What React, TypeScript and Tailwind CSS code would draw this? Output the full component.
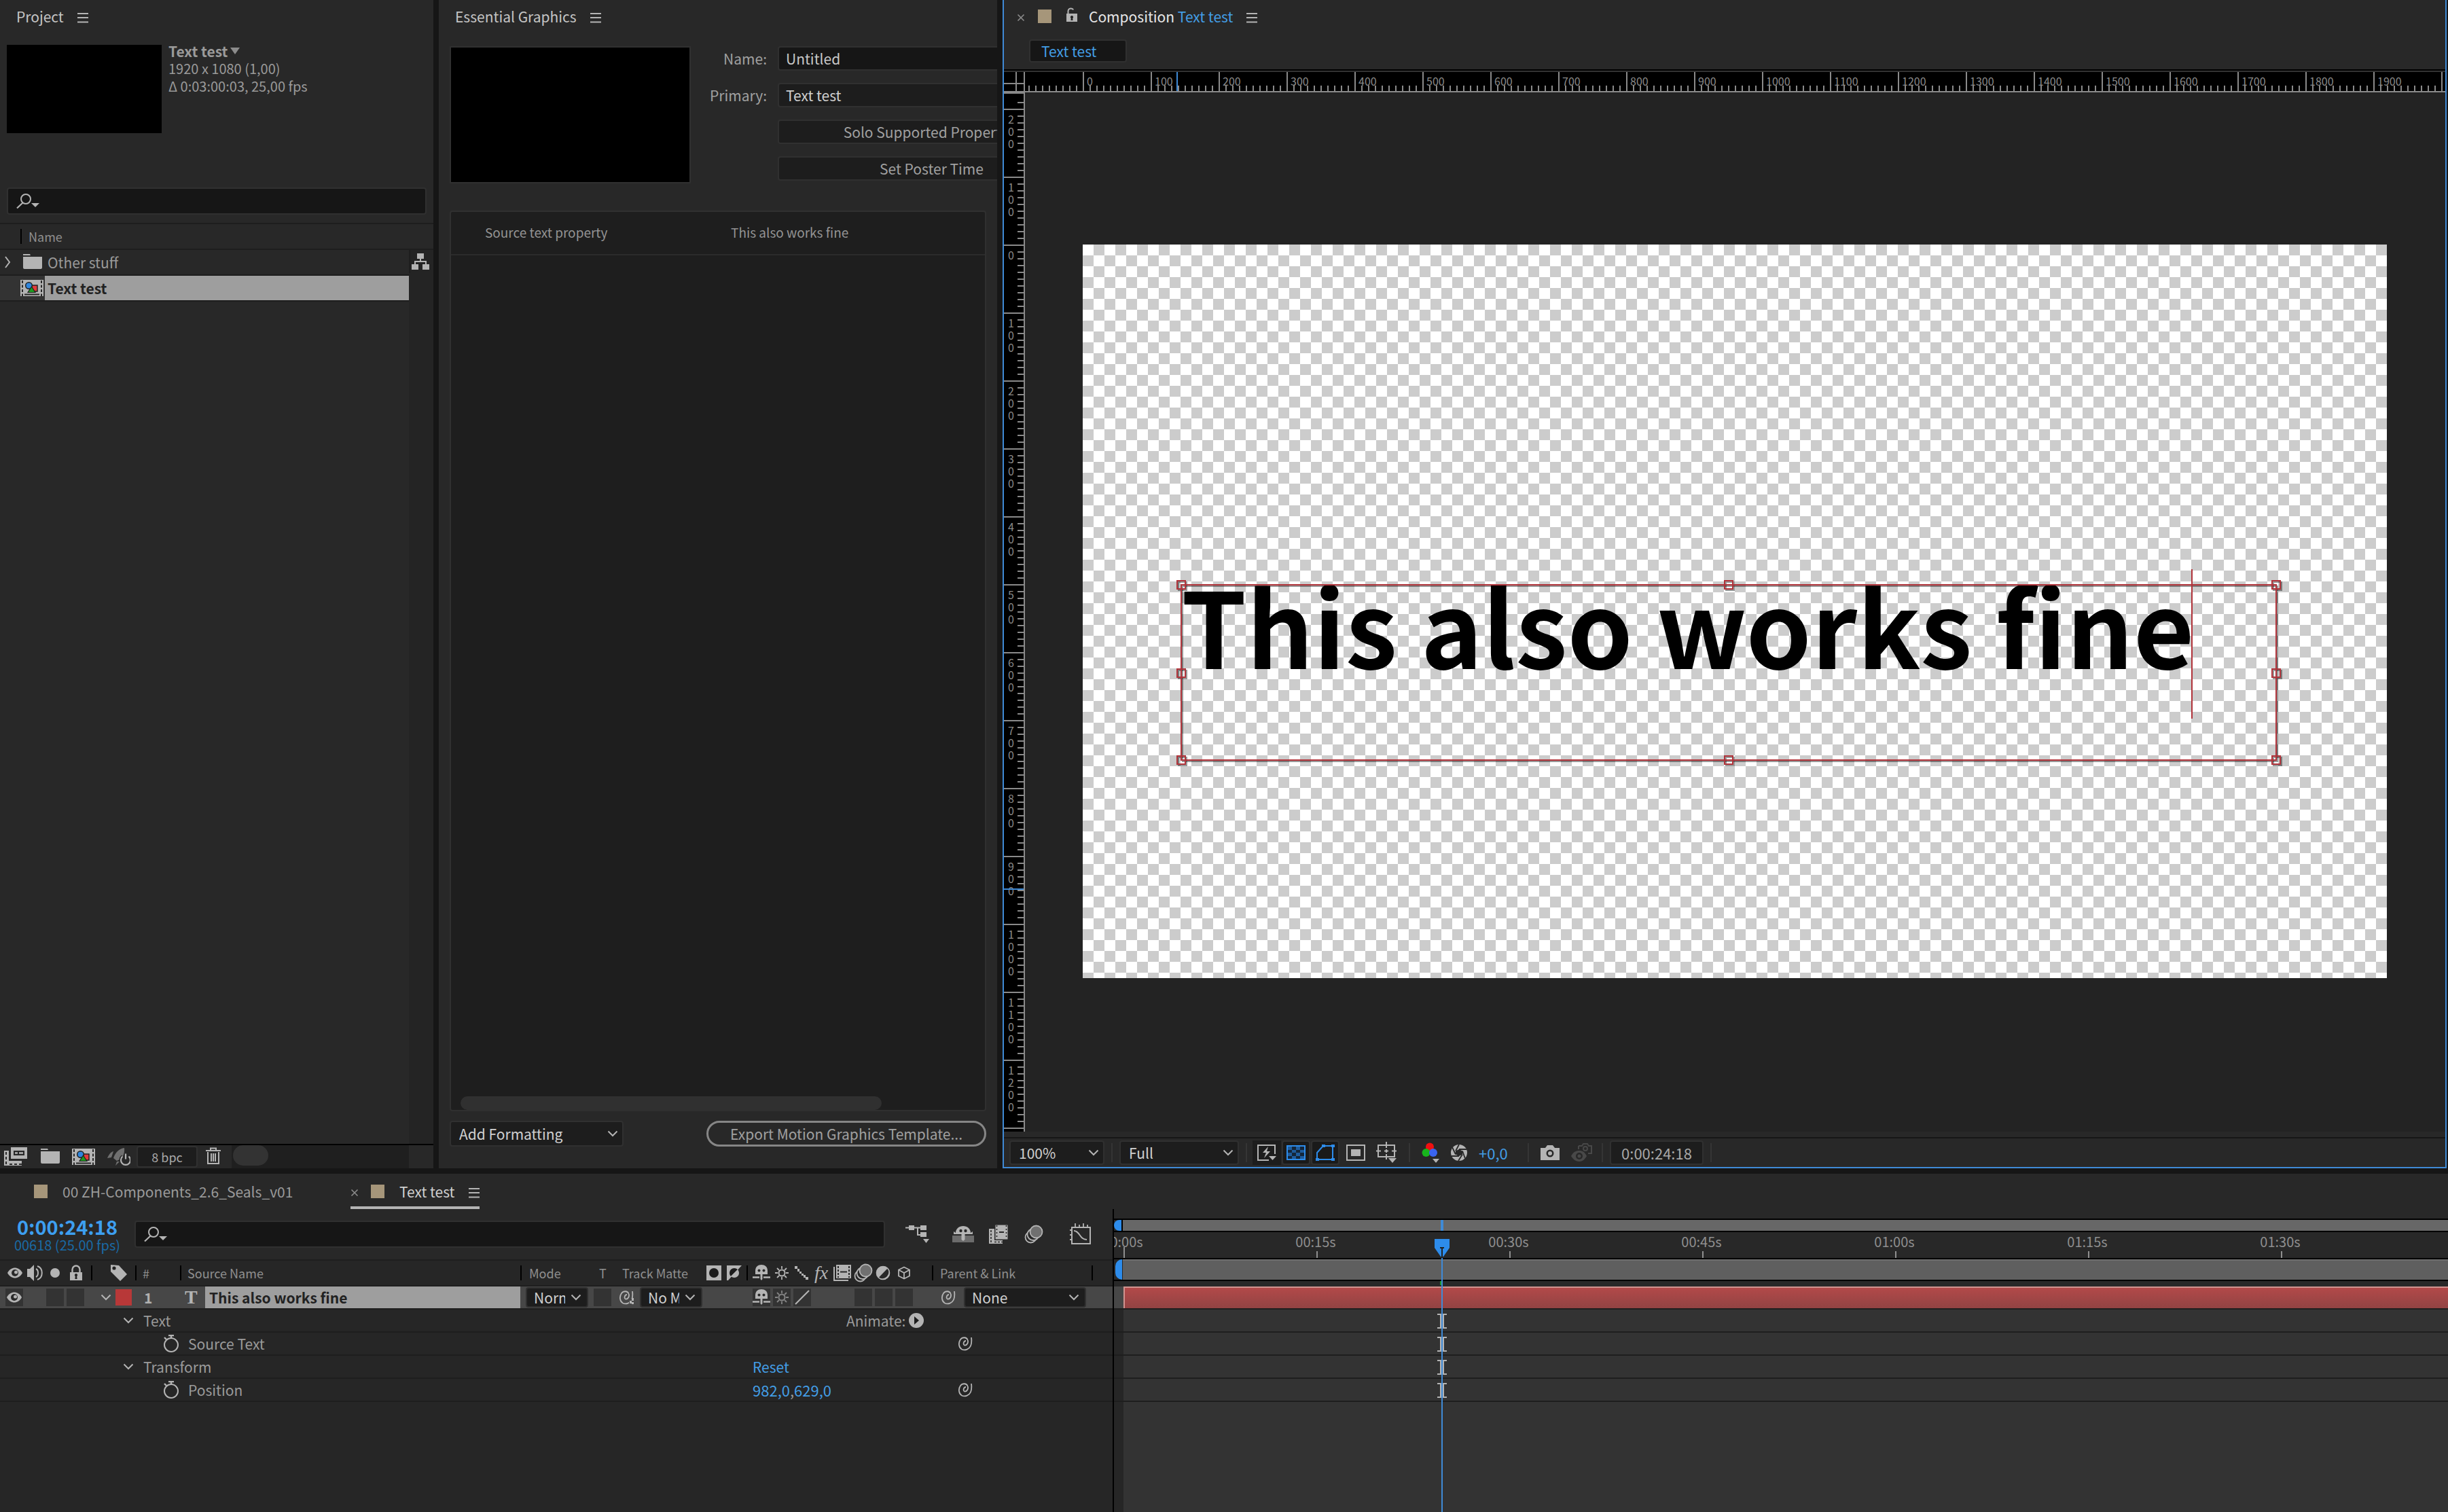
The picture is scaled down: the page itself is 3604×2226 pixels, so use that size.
import type { ReactNode } from "react";

interface IconProps {
  w: number;
  h: number;
  className?: string;
  children: ReactNode;
}

function Icon({ w, h, className = "", children }: IconProps) {
  return (
    <svg width={w} height={h} viewBox={`0 0 ${w} ${h}`} fill="none" className={`shrink-0 ${className}`} aria-hidden="true">
      {children}
    </svg>
  );
}

const GREY = "#b4b4b4";
const BLUE = "#2d8ceb";

// ---------- icons ----------

const MenuIcon = () => (
  <Icon w={16} h={16}>
    <path d="M0 2h16M0 8h16M0 14.500h16" stroke={GREY} strokeWidth="2" />
  </Icon>
);

const CloseIcon = () => (
  <Icon w={12} h={12}>
    <path d="M1.500 1.500l9 9M10.500 1.500l-9 9" stroke="#8c8c8c" strokeWidth="1.600" />
  </Icon>
);

const SearchIcon = () => (
  <Icon w={36} h={24}>
    <circle cx="14" cy="9" r="7" stroke={GREY} strokeWidth="2" />
    <path d="M9.500 14.500L1 22.500" stroke={GREY} strokeWidth="2.200" />
    <path d="M22 15h12l-6 6z" fill={GREY} />
  </Icon>
);

const Chevron = ({ className = "" }: { className?: string }) => (
  <Icon w={16} h={10} className={className}>
    <path d="M1.500 1.500L8 8l6.500-6.500" stroke={GREY} strokeWidth="2" />
  </Icon>
);

const FolderIcon = () => (
  <Icon w={28} h={24}>
    <path d="M0 0h10l1 2H0zM0 4h28v16a2 2 0 0 1-2 2H2a2 2 0 0 1-2-2z" fill={GREY} />
  </Icon>
);

const CompIcon = () => (
  <Icon w={34} h={26}>
    <path d="M0 1h34v24H0z" fill={GREY} />
    <path d="M3 2v23M31 2v23" stroke="#282828" strokeWidth="2" strokeDasharray="4 2.500" />
    <path d="M6 22.500h22" stroke="#282828" strokeWidth="2" />
    <path d="M16 9h9v9h-9z" fill="#e23b3b" stroke="#222" strokeWidth="1.500" />
    <circle cx="12.500" cy="9.500" r="4.800" fill="#2f86dd" stroke="#222" strokeWidth="1.500" />
    <path d="M16.500 11l5.500 8.500H11z" fill="#1f9a20" stroke="#222" strokeWidth="1.200" />
  </Icon>
);

const FlowIcon = () => (
  <Icon w={26} h={24}>
    <path d="M8 0h10v8H8zM0 16h10v8H0zM16 16h10v8H16z" fill={GREY} />
    <path d="M13 8v4M5 16v-4h16v4" stroke={GREY} strokeWidth="2" />
  </Icon>
);

const InterpretIcon = () => (
  <Icon w={34} h={28}>
    <path d="M10 0h24v17H10z" fill={GREY} />
    <path d="M14 5h16v7H14z" fill="#282828" />
    <path d="M16 8.500h4M22 8.500h6" stroke={GREY} strokeWidth="2.400" />
    <path d="M0 5h7v15h19v7H0z" fill={GREY} />
    <path d="M3 7v20M8 25h18" stroke="#282828" strokeWidth="2" strokeDasharray="4 3" />
  </Icon>
);

const RocketIcon = () => (
  <Icon w={34} h={28}>
    <path d="M25 1c-7 1-13 6-16 15l5 4c8-3 12-9 11-19zM9 6c-4 1-7 5-9 10l6-1zM14 21l-2 6 6-6z" fill="#707070" />
    <path d="M22.500 13.500a7 7 0 1 0 9 0M27 9.500v8" stroke="#282828" strokeWidth="5" />
    <path d="M22.500 13.500a7 7 0 1 0 9 0M27 9.500v8" stroke={GREY} strokeWidth="2.200" />
  </Icon>
);

const TrashIcon = () => (
  <Icon w={22} h={26}>
    <path d="M0 5h22M7 5V1.500h8V5" stroke={GREY} strokeWidth="2" />
    <path d="M3 7v17h16V7M8 9v12M11 9v12M14 9v12" stroke={GREY} strokeWidth="2" />
  </Icon>
);

const UnlockIcon = () => (
  <Icon w={18} h={22}>
    <path d="M1 9h16v12H1z" fill={GREY} />
    <path d="M3.500 9V5.500C3.500 2.500 6 1.500 7.500 1.500s3 .5 3.500 2" stroke={GREY} strokeWidth="2" />
    <path d="M9 12a2.200 2.200 0 0 1 1.200 4l.4 3H7.400l.4-3A2.200 2.200 0 0 1 9 12z" fill="#222" />
  </Icon>
);

const LockIcon = () => (
  <Icon w={20} h={24}>
    <path d="M1 11h18v12H1z" fill={GREY} />
    <path d="M4.500 11V7a5.500 5.500 0 0 1 11 0v4" stroke={GREY} strokeWidth="2.400" />
    <path d="M10 13a2.200 2.200 0 0 1 1.200 4l.4 4H8.400l.4-4A2.200 2.200 0 0 1 10 13z" fill="#222" />
  </Icon>
);

const EyeIcon = () => (
  <Icon w={22} h={18}>
    <path d="M0 9C3 3.500 7 1.500 11 1.500S19 3.500 22 9c-3 5.500-7 7.500-11 7.500S3 14.500 0 9z" fill={GREY} />
    <circle cx="11" cy="9" r="5" fill="#282828" />
    <circle cx="12.500" cy="8" r="2.500" fill={GREY} />
  </Icon>
);

const SpeakerIcon = () => (
  <Icon w={24} h={24}>
    <path d="M0 6h4l6-6v24l-6-6H0z" fill={GREY} />
    <path d="M13 6c4 2 4 10 0 12M15 2c9 3 9 17 0 20" stroke={GREY} strokeWidth="2" />
  </Icon>
);

const TagIcon = () => (
  <Icon w={26} h={26}>
    <path d="M1 1l12 1 12 13-10 10L1 11z" fill={GREY} />
    <circle cx="6" cy="6" r="2.600" fill="#222" />
  </Icon>
);

const GhostIcon = () => (
  <Icon w={26} h={26}>
    <path d="M4 15V10c0-6 4-9 9-9s9 3 9 9v5z" fill={GREY} />
    <circle cx="9.500" cy="9.500" r="2" fill="#282828" />
    <circle cx="16.500" cy="9.500" r="2" fill="#282828" />
    <path d="M0 19.500h10M16 19.500h10" stroke={GREY} strokeWidth="2.400" />
    <path d="M11.500 14h3v8l-1.500 2-1.500-2z" fill={GREY} />
  </Icon>
);

const SunIcon = ({ color = GREY }: { color?: string }) => (
  <Icon w={22} h={24}>
    <circle cx="11" cy="12" r="4.500" stroke={color} strokeWidth="2" />
    <path d="M11 2v4M11 18v4M1 12h4M17 12h4M4 5l3 3M15 16l3 3M18 5l-3 3M7 16l-3 3" stroke={color} strokeWidth="1.800" />
  </Icon>
);

const SlashIcon = () => (
  <Icon w={22} h={22}>
    <path d="M1 21L21 1" stroke={GREY} strokeWidth="2.200" />
  </Icon>
);

const StairIcon = () => (
  <Icon w={22} h={22}>
    <path d="M1 1h4v4H1zM5 5h3v4H5zM8 9h3v3H8zM11 12h3v3h-3zM14 14h3v4h-3zM17 17h4v4h-4z" fill={GREY} />
  </Icon>
);

const FilmIcon = () => (
  <Icon w={26} h={24}>
    <path d="M1 3v20h21" stroke={GREY} strokeWidth="2" />
    <path d="M4 0h22v20H4z" fill={GREY} />
    <path d="M7 2v17M23 2v17" stroke="#282828" strokeWidth="2" strokeDasharray="3 2" />
    <path d="M10 10.500h10" stroke="#282828" strokeWidth="2" />
  </Icon>
);

const FramesIcon = () => (
  <Icon w={30} h={30}>
    <path d="M0 7h8v17h12v5H0z" fill={GREY} />
    <path d="M3 9v18M8 26.500h12" stroke="#282828" strokeWidth="1.600" strokeDasharray="3 2" />
    <path d="M9 1h19v22H9z" fill={GREY} stroke="#282828" strokeWidth="1" />
    <path d="M11.500 2v20M25.500 2v20" stroke="#282828" strokeWidth="1.600" strokeDasharray="2 3" />
    <path d="M15 12h7" stroke="#282828" strokeWidth="2" />
  </Icon>
);

const MotionBlurIcon = () => (
  <Icon w={28} h={28}>
    <circle cx="9.500" cy="18.500" r="8" stroke={GREY} strokeWidth="1.800" fill="#282828" />
    <circle cx="13" cy="14.500" r="8.500" stroke={GREY} strokeWidth="1.800" fill="#282828" />
    <circle cx="17.500" cy="10.500" r="9" stroke={GREY} strokeWidth="1.800" fill="#707070" />
  </Icon>
);

const HalfIcon = () => (
  <Icon w={22} h={22}>
    <circle cx="11" cy="11" r="10" fill={GREY} />
    <path d="M18 4A10 10 0 0 1 4.500 18z" fill="#282828" />
    <circle cx="11" cy="11" r="9.500" stroke={GREY} strokeWidth="1.600" />
  </Icon>
);

const CubeIcon = () => (
  <Icon w={20} h={20}>
    <path d="M10 1.500l8 4v9l-8 4-8-4v-9zM2 5.500l8 4.500 8-4.500M10 10v8.500" stroke={GREY} strokeWidth="1.800" />
  </Icon>
);

const MatteIcon = () => (
  <Icon w={22} h={22}>
    <path d="M0 0h22v22H0z" fill={GREY} />
    <circle cx="11" cy="11" r="7" fill="#1c1c1c" />
  </Icon>
);

const MatteInvertIcon = () => (
  <Icon w={22} h={22}>
    <path d="M0 0h22L2 22H0z" fill={GREY} />
    <path d="M16 6A7 7 0 1 0 6 16z" fill="#1c1c1c" />
    <path d="M16 6a7 7 0 0 1-10 10z" fill={GREY} />
  </Icon>
);

const SpiralIcon = ({ matte = false }: { matte?: boolean }) => (
  <Icon w={24} h={22}>
    <path
      d="M13 7C9.500 7 8.500 12.500 11 13.500c4 .5 6-4.500 4.500-8C14 1.500 8 1 5 5 1.500 10 2.500 17 7 19.500c5 2.500 11-.5 13-5 1.500-3.500 1.500-8.500 1-12.500"
      stroke={GREY}
      strokeWidth="1.800"
    />
    {matte && <path d="M16 13h8v9h-8z" fill="#474747" />}
    {matte && <path d="M20 12h3v4h-3zM17 16h3v4h-3zM20 18h3v3h-3z" fill={GREY} />}
  </Icon>
);

const StopwatchIcon = () => (
  <Icon w={24} h={26}>
    <path d="M8 1h8M12 1v4" stroke={GREY} strokeWidth="2.400" />
    <path d="M2 4l3 3" stroke={GREY} strokeWidth="2.400" />
    <circle cx="12" cy="15" r="10" stroke={GREY} strokeWidth="2" />
  </Icon>
);

const PlayCircleIcon = () => (
  <Icon w={22} h={22}>
    <circle cx="11" cy="11" r="11" fill={GREY} />
    <path d="M8 5l7 6-7 6z" fill="#1c1c1c" />
  </Icon>
);

const FlowchartIcon = () => (
  <Icon w={36} h={28}>
    <path d="M0 4.500h24M18 5v10h6" stroke={GREY} strokeWidth="2" />
    <path d="M5 1h8v7H5zM22 1h9v7h-9zM22 11h9v7h-9z" fill={GREY} />
    <path d="M26 21h9l-4.500 6z" fill={GREY} />
  </Icon>
);

const ShyIcon = () => (
  <Icon w={32} h={26}>
    <path d="M0 15h32v10H0z" fill="#6c6c6c" />
    <path d="M2 13V9l3 2c0-6 5-10 11-10s11 4 11 10l3-2v4z" fill={GREY} />
    <circle cx="12.500" cy="8" r="2.200" fill="#282828" />
    <circle cx="19.500" cy="8" r="2.200" fill="#282828" />
    <path d="M13.500 12h5v9L16 23l-2.500-2z" fill={GREY} />
  </Icon>
);

const GraphIcon = () => (
  <Icon w={34} h={32}>
    <path d="M4 6h27v24H4z" stroke={GREY} strokeWidth="2" />
    <path d="M9 0v6M15 2v4M21 0v6M27 2v4M1 10h3M1 17h3M1 24h3" stroke={GREY} strokeWidth="1.800" />
    <path d="M7 11c9 0 8 13 19 13" stroke={GREY} strokeWidth="2" />
  </Icon>
);

const FastPreviewIcon = () => (
  <Icon w={30} h={28}>
    <path d="M27 16V3H2v22h16" stroke={GREY} strokeWidth="2" />
    <path d="M17 5l-8 9h5l-3 8 9-10h-5z" fill={GREY} />
    <path d="M18 19h11l-5.500 6z" fill={GREY} />
  </Icon>
);

const TransparencyIcon = () => (
  <Icon w={28} h={22}>
    <path d="M1 1h26v20H1z" stroke={BLUE} strokeWidth="2" fill="#14263a" />
    <path d="M2 2h6v5H2zM14 2h6v5h-6zM8 7h6v4H8zM20 7h6v4h-6zM2 11h6v5H2zM14 11h6v5h-6zM8 16h6v4H8zM20 16h6v4h-6z" fill="#1f5c9c" />
  </Icon>
);

const MaskIcon = () => (
  <Icon w={30} h={26}>
    <path d="M3 23V13L12 3h14v20z" stroke={BLUE} strokeWidth="2" />
    <path d="M1 21h5v4H1zM24 21h5v4h-5zM24 1h5v4h-5zM10 1h5v4h-5z" fill={BLUE} />
  </Icon>
);

const RegionIcon = () => (
  <Icon w={28} h={24}>
    <path d="M1 1h26v22H1z" stroke={GREY} strokeWidth="2" />
    <path d="M7 7h14v10H7z" fill={GREY} />
  </Icon>
);

const GuidesIcon = () => (
  <Icon w={30} h={32}>
    <path d="M3 5h24v17H3z" stroke={GREY} strokeWidth="2" />
    <path d="M15 0v9M15 18v8M0 13.500h7M23 13.500h7M12 13.500h6M15 11v5" stroke={GREY} strokeWidth="2" />
    <path d="M18 24h12l-6 7z" fill={GREY} />
  </Icon>
);

const ChannelsIcon = () => (
  <Icon w={26} h={30}>
    <circle cx="12" cy="6.500" r="6" fill="#f01010" />
    <circle cx="6.500" cy="15" r="6" fill="#18b51c" />
    <circle cx="17" cy="15" r="6" fill="#3a64f0" />
    <path d="M16 24h10l-5 6z" fill={GREY} />
  </Icon>
);

const ApertureIcon = () => (
  <Icon w={26} h={26}>
    <circle cx="13" cy="13" r="12" fill={GREY} />
    <path d="M13 8l5 2.500v5L13 18l-5-2.500v-5z" fill="#282828" />
    <path d="M8 10.500L13 1M13 8l11 0M18 10.500l4 11M18 15.500L12 25M13 18L2 18M8 15.500L3 5" stroke="#282828" strokeWidth="1.800" />
  </Icon>
);

const CameraIcon = () => (
  <Icon w={28} h={24}>
    <path d="M0 5h7l3-4h8l3 4h7v18H0z" fill={GREY} />
    <circle cx="14" cy="13" r="5.500" fill="#282828" />
    <circle cx="14" cy="13" r="3" fill={GREY} />
  </Icon>
);

const ShowSnapshotIcon = () => (
  <Icon w={32} h={28}>
    <path d="M1 19c3-6 7-8 12-8s8 2 11 8c-3 5-6 8-11 8S4 24 1 19z" fill="#484848" />
    <circle cx="13" cy="19" r="5" fill="#282828" />
    <circle cx="13" cy="19" r="2.500" fill="#484848" />
    <path d="M12 4h5l2-3h6l2 3h4v11h-5M12 4v5" stroke="#484848" strokeWidth="2" />
    <circle cx="22" cy="8" r="3" stroke="#484848" strokeWidth="2" />
  </Icon>
);

const IBeam = () => (
  <Icon w={14} h={22}>
    <path d="M0 1h14M0 21h14" stroke={GREY} strokeWidth="2" />
    <path d="M7 1v20" stroke={GREY} strokeWidth="6" />
  </Icon>
);

// ---------- shared controls ----------

interface SelectProps {
  label: string;
  value: string;
  className: string;
  selectClass?: string;
  chevronClass?: string;
}

function Select({ label, value, className, selectClass = "pl-3 pr-8", chevronClass = "right-2" }: SelectProps) {
  return (
    <div className={`relative shrink-0 ${className}`}>
      <select
        aria-label={label}
        className={`block h-full w-full appearance-none rounded border-2 border-[#303030] bg-[#1d1d1d] text-[#d0d0d0] ${selectClass}`}
      >
        <option>{value}</option>
      </select>
      <span className={`pointer-events-none absolute inset-y-0 flex items-center ${chevronClass}`}>
        <Chevron />
      </span>
    </div>
  );
}

function PanelTitle({ title }: { title: string }) {
  return (
    <header className="flex h-12 shrink-0 items-center gap-5 px-6">
      <h2 className="text-[#c4c4c4]">{title}</h2>
      <button aria-label={`${title} menu`} className="pt-1">
        <MenuIcon />
      </button>
    </header>
  );
}

const Swatch = () => <span className="size-5 shrink-0 bg-[#a6967a]" />;

// ---------- project ----------

function ProjectPanel() {
  return (
    <section className="flex w-[638px] shrink-0 flex-col bg-[#282828]">
      <PanelTitle title="Project" />
      <div className="flex h-[228px] shrink-0 gap-[10px] px-[10px] pt-[14px]">
        <div className="mt-1 h-[130px] w-[228px] bg-black" />
        <div className="text-xl leading-[26px] text-[#9a9a9a]">
          <button className="flex items-center gap-1 text-[21px] font-bold leading-[26px]">
            Text test
            <Icon w={14} h={12}>
              <path d="M0 1h14L7 11z" fill="#8c8c8c" />
            </Icon>
          </button>
          <p>1920 x 1080 (1,00)</p>
          <p>Δ 0:03:00:03, 25,00 fps</p>
        </div>
      </div>
      <label className="mx-[10px] mb-3 flex h-10 shrink-0 items-center rounded border-2 border-[#303030] bg-[#161616] pl-3">
        <SearchIcon />
        <input aria-label="Search project" className="min-w-0 flex-1 bg-transparent outline-none" />
      </label>
      <div className="flex h-10 shrink-0 items-center border-y-2 border-[#1e1e1e] pl-[30px] text-lg text-[#8f8f8f]">
        <span className="mr-[10px] h-[22px] w-[2px] bg-black" />
        Name
      </div>
      <div className="flex min-h-0 flex-1">
        <ul className="flex-1 text-[#9a9a9a]">
          <li className="flex h-[38px] items-center border-b-2 border-[#1e1e1e]">
            <button aria-label="Expand Other stuff" className="w-[34px] pl-[7px]">
              <Icon w={9} h={20}>
                <path d="M1 2l6 8-6 8" stroke={GREY} strokeWidth="2" />
              </Icon>
            </button>
            <FolderIcon />
            <span className="pl-2">Other stuff</span>
          </li>
          <li className="flex h-[38px] items-center border-b-2 border-[#1e1e1e] bg-[#333]">
            <span className="flex w-[66px] justify-end pr-[2px]">
              <CompIcon />
            </span>
            <span className="h-9 flex-1 bg-[#9e9e9e] pl-1 font-bold leading-9 text-[#222]">Text test</span>
          </li>
        </ul>
        <div className="w-9 bg-[#242424]">
          <button aria-label="Project flowchart" className="flex h-[34px] items-center border-l-2 border-[#1e1e1e] pl-[2px]">
            <FlowIcon />
          </button>
        </div>
      </div>
      <footer className="flex h-9 shrink-0 items-center border-t-2 border-black pl-[6px]">
        <button aria-label="Interpret footage" className="w-[54px]"><InterpretIcon /></button>
        <button aria-label="New folder" className="w-[46px]"><FolderIcon /></button>
        <button aria-label="New composition" className="w-[52px]"><CompIcon /></button>
        <button aria-label="Project settings" className="w-[43px]"><RocketIcon /></button>
        <button className="mr-3 h-[32px] w-[90px] rounded border-2 border-[#303030] bg-[#1d1d1d] text-lg leading-7 text-[#a8a8a8]">8 bpc</button>
        <button aria-label="Delete" className="pb-[2px]"><TrashIcon /></button>
        <div className="ml-4 mr-9 h-full flex-1 bg-[#1f1f1f] pl-[2px]">
          <div className="h-[30px] w-[52px] rounded-full bg-[#333]" />
        </div>
      </footer>
    </section>
  );
}

// ---------- essential graphics ----------

function EssentialGraphicsPanel() {
  const button = "col-start-2 h-9 w-[453px] rounded border-2 border-[#303030] bg-[#1d1d1d] text-[#a0a0a0]";
  return (
    <section className="flex w-[822px] shrink-0 flex-col overflow-hidden bg-[#282828]">
      <PanelTitle title="Essential Graphics" />
      <div className="flex h-[262px] shrink-0 pl-4 pt-5">
        <div className="h-[202px] w-[355px] shrink-0 border-2 border-[#303030] bg-black" />
        <div className="grid w-[597px] shrink-0 auto-rows-max grid-cols-[112px_453px] gap-x-4 gap-y-[18px]">
          <label htmlFor="eg-name" className="text-right leading-9 text-[#a0a0a0]">Name:</label>
          <input id="eg-name" defaultValue="Untitled" className="h-9 rounded border-2 border-[#303030] bg-[#161616] px-[10px] text-[#c8c8c8]" />
          <span className="text-right leading-9 text-[#a0a0a0]">Primary:</span>
          <Select label="Primary" value="Text test" className="h-9" selectClass="pl-[10px]" />
          <button className={button}>Solo Supported Properties</button>
          <button className={button}>Set Poster Time</button>
        </div>
      </div>
      <div className="mx-4 flex min-h-0 flex-1 flex-col rounded border-2 border-[#303030] bg-[#1e1e1e]">
        <div className="flex h-16 items-center border-b-2 border-[#2b2b2b] pb-[2px] pl-[50px] text-[19px] text-[#939393]">
          <span className="w-[362px]">Source text property</span>
          <span>This also works fine</span>
        </div>
        <div className="mt-auto h-5 w-[620px] ml-[14px] rounded-full bg-[#303030]" />
      </div>
      <footer className="flex h-[84px] shrink-0 items-start justify-between px-4 pt-[14px]">
        <Select label="Add Formatting" value="Add Formatting" className="h-[38px] w-64" />
        <button className="h-[38px] rounded-full border-[3px] border-[#868686] px-8 leading-8 text-[#a0a0a0]">
          Export Motion Graphics Template...
        </button>
      </footer>
    </section>
  );
}

// ---------- composition viewer ----------

const range = (from: number, to: number, step: number) =>
  Array.from({ length: Math.floor((to - from) / step) + 1 }, (_, i) => from + i * step);

function HorizontalRuler() {
  const origin = 116;
  return (
    <svg className="block h-[30px] w-full bg-black" fill="#8a8a8a" fontSize="16">
      {range(-80, 2100, 10).map((v) => (
        <rect key={v} x={origin + v} y={v % 100 ? 20 : 0} width="2" height={v % 100 ? 10 : 30} />
      ))}
      {range(0, 1900, 100).map((v) => (
        <text key={v} x={origin + v + 6} y="20">{v}</text>
      ))}
      <rect x={origin + 138} y="0" width="2" height="30" fill="#3f8ad6" />
      <rect x="0" y="28" width="100%" height="2" />
      <rect x="0" y="16" width="30" height="2" />
      <rect x="17" y="0" width="2" height="28" />
      <rect x="29" y="0" width="2" height="30" />
    </svg>
  );
}

function VerticalRuler() {
  const origin = 224;
  return (
    <svg className="block h-full w-[31px] shrink-0 bg-black" fill="#8a8a8a" fontSize="16">
      <rect x="0" y="0" width="31" height="2" />
      {range(-210, 1300, 10).map((v) => (
        <rect key={v} x={v % 100 ? 20 : 0} y={origin + v} width={v % 100 ? 10 : 30} height="2" />
      ))}
      {range(-200, 1200, 100).map((v) =>
        String(Math.abs(v)).split("").map((digit, i) => (
          <text key={`${v}-${i}`} x="6" y={origin + v + 22 + i * 18}>{digit}</text>
        ))
      )}
      <rect x="0" y={origin + 948} width="29" height="2" fill="#3f8ad6" />
      <rect x="29" y="0" width="2" height="100%" />
    </svg>
  );
}

const HANDLES = [
  [145, 501], [951, 501], [1757, 501],
  [145, 631], [1757, 631],
  [145, 759], [951, 759], [1757, 759],
];

function TextBoxOutline() {
  const shape = (
    <>
      <rect x="145" y="501" width="1612" height="258" />
      {HANDLES.map(([x, y]) => (
        <rect key={`${x}-${y}`} x={x - 6} y={y - 6} width="12" height="12" />
      ))}
    </>
  );
  return (
    <svg className="absolute inset-0 size-full" fill="none" strokeWidth="2">
      <g stroke="#000" strokeOpacity="0.4" transform="translate(2 2)">{shape}</g>
      <g stroke="#b0333a">
        {shape}
        <path d="M1633 478v220" />
      </g>
    </svg>
  );
}

const Divider = () => <span className="h-7 w-[2px] shrink-0 bg-[#353535]" />;

function CompositionPanel() {
  const toggle = "flex h-9 w-[42px] items-center justify-center rounded border-2 border-[#303030] bg-[#1a1a1a]";
  return (
    <section className="mr-[2px] flex min-w-0 flex-1 flex-col border-x-2 border-b-2 border-[#3f8ad6] bg-[#282828]">
      <header className="flex h-12 shrink-0 items-center pl-[19px]">
        <button aria-label="Close" className="mr-[19px] pt-1"><CloseIcon /></button>
        <Swatch />
        <button aria-label="Lock" className="ml-[21px] mr-4 pb-1"><UnlockIcon /></button>
        <h2 className="text-[#e6e6e6]">
          Composition <span className="text-[#439ee6]">Text test</span>
        </h2>
        <button aria-label="Composition menu" className="ml-5 pt-1"><MenuIcon /></button>
      </header>
      <nav className="h-[54px] shrink-0 pl-[37px] pt-[10px]">
        <button className="block h-[34px] w-36 rounded border-2 border-[#303030] bg-[#161616] pl-4 text-left leading-[30px] text-[#439ee6]">Text test</button>
      </nav>
      <div className="shrink-0 border-t-2 border-black">
        <div className="border-t-2 border-[#333]"><HorizontalRuler /></div>
      </div>
      <div className="flex min-h-0 flex-1 overflow-hidden bg-[#232323]">
        <VerticalRuler />
        <div className="flex min-w-0 flex-1 items-center justify-center pb-[2px] pr-[1px]">
          <div className="relative h-[1080px] w-[1920px] shrink-0 bg-[repeating-conic-gradient(#cccccc_0_25%,#ffffff_0_50%)] bg-[length:32px_32px]">
            <p className="absolute left-[145px] top-[481px] whitespace-nowrap text-[154px] font-bold leading-[154px] text-black">
              This also works fine
            </p>
            <TextBoxOutline />
          </div>
        </div>
      </div>
      <footer className="mt-2 flex h-11 shrink-0 items-center border-t-2 border-[#161616] pl-2">
        <Select label="Magnification" value="100%" className="mr-[10px] h-9 w-[140px]" />
        <Divider />
        <Select label="Resolution" value="Full" className="mx-[10px] h-9 w-44" />
        <Divider />
        <div className="ml-2 flex items-center gap-[1px]">
          <button aria-label="Fast previews" className="flex h-9 w-[42px] items-center justify-center bg-[#1d1d1d]"><FastPreviewIcon /></button>
          <button aria-label="Transparency grid" className={toggle}><TransparencyIcon /></button>
          <button aria-label="Mask visibility" className={toggle}><MaskIcon /></button>
        </div>
        <button aria-label="Region of interest" className="ml-[10px]"><RegionIcon /></button>
        <button aria-label="Guides" className="ml-4 mr-[18px]"><GuidesIcon /></button>
        <Divider />
        <button aria-label="Channels" className="ml-[17px]"><ChannelsIcon /></button>
        <button aria-label="Reset exposure" className="ml-4"><ApertureIcon /></button>
        <button className="ml-4 w-[72px] text-left text-[22px] text-[#439ee6]">+0,0</button>
        <Divider />
        <button aria-label="Take snapshot" className="ml-[17px]"><CameraIcon /></button>
        <button aria-label="Show snapshot" className="ml-4 mr-[14px]"><ShowSnapshotIcon /></button>
        <Divider />
        <button className="mx-[10px] h-9 w-[138px] rounded border-2 border-[#303030] bg-[#1d1d1d] text-[22px] leading-8 text-[#a8a8a8]">0:00:24:18</button>
        <Divider />
      </footer>
    </section>
  );
}

// ---------- timeline ----------

const Sep = () => <span className="h-[22px] w-[2px] shrink-0 bg-black" />;
const Box = ({ children }: { children?: ReactNode }) => (
  <span className="flex size-[26px] shrink-0 items-center justify-center bg-[#333]">{children}</span>
);

function ColumnHeader() {
  return (
    <div className="flex h-10 shrink-0 items-center border-y-2 border-[#1e1e1e] text-lg text-[#8f8f8f]">
      <div className="flex w-[134px] items-center pl-[11px]">
        <EyeIcon />
        <span className="pl-[7px]"><SpeakerIcon /></span>
        <span className="ml-[10px] mr-[14px] h-[14px] w-[14px] rounded-full bg-[#b4b4b4]" />
        <LockIcon />
      </div>
      <Sep />
      <span className="w-[63px] pl-[26px]"><TagIcon /></span>
      <Sep />
      <span className="w-16 pl-[9px]">#</span>
      <Sep />
      <span className="w-[499px] pl-[9px]">Source Name</span>
      <Sep />
      <div className="flex w-[331px] items-center pl-[11px]">
        <span className="w-[103px]">Mode</span>
        <span className="w-[34px]">T</span>
        <span className="w-[124px]">Track Matte</span>
        <MatteIcon />
        <span className="pl-2"><MatteInvertIcon /></span>
      </div>
      <Sep />
      <div className="flex w-[271px] items-center pl-[7px]">
        <span className="w-[30px]"><GhostIcon /></span>
        <span className="w-[31px] pl-[2px]"><SunIcon /></span>
        <span className="w-[30px]"><StairIcon /></span>
        <span className="w-[28px] font-['Liberation_Serif',serif] text-[28px] italic leading-6 text-[#b4b4b4]">fx</span>
        <span className="w-[30px]"><FilmIcon /></span>
        <span className="w-[32px]"><MotionBlurIcon /></span>
        <span className="w-[32px]"><HalfIcon /></span>
        <CubeIcon />
      </div>
      <Sep />
      <span className="w-[233px] pl-[10px]">Parent &amp; Link</span>
      <Sep />
    </div>
  );
}

function LayerRow() {
  const cell = "pl-[10px] pr-8 leading-[26px]";
  return (
    <div className="flex h-[34px] shrink-0 items-center border-b-2 border-[#1e1e1e] bg-[#474747]">
      <div className="flex w-[148px] items-center pl-2">
        <Box><EyeIcon /></Box>
        <span className="w-[34px]" />
        <Box />
        <span className="w-1" />
        <Box />
      </div>
      <button aria-label="Collapse layer" className="w-[22px]"><Chevron /></button>
      <span className="size-6 bg-[#b83838]" />
      <span className="w-[78px] pl-[18px] font-bold text-[#b0b0b0]">1</span>
      <span className="w-[30px] font-['Liberation_Serif',serif] text-[28px] font-bold leading-8 text-[#b4b4b4]">T</span>
      <span className="h-8 w-[464px] bg-[#9e9e9e] pl-[6px] font-bold leading-8 text-[#222]">This also works fine</span>
      <div className="flex w-[342px] items-center pl-2">
        <Select label="Blend mode" value="Normal" className="h-[30px] w-[92px]" selectClass={cell} chevronClass="right-[10px]" />
        <span className="w-2" />
        <Box />
        <span className="pl-[10px] pr-2"><SpiralIcon matte /></span>
        <Select label="Track matte" value="No Matte" className="h-[30px] w-[92px]" selectClass={cell} chevronClass="right-[10px]" />
      </div>
      <div className="flex w-[276px] items-center gap-1">
        <Box><GhostIcon /></Box>
        <Box><SunIcon color="#858585" /></Box>
        <Box><SlashIcon /></Box>
        <span className="w-14" />
        <Box />
        <Box />
        <Box />
      </div>
      <button aria-label="Parent pick whip" className="w-[35px]"><SpiralIcon /></button>
      <Select label="Parent" value="None" className="h-[30px] w-[180px]" selectClass={cell} chevronClass="right-[10px]" />
    </div>
  );
}

interface PropertyRowProps {
  name: string;
  group?: boolean;
  children?: ReactNode;
}

function PropertyRow({ name, group = false, children }: PropertyRowProps) {
  return (
    <div className="flex h-[34px] shrink-0 items-center border-b-2 border-[#1e1e1e] text-[#9a9a9a]">
      {group ? (
        <button aria-label={`Collapse ${name}`} className="ml-[181px] w-[30px]"><Chevron /></button>
      ) : (
        <button aria-label={`Animate ${name}`} className="ml-[240px] w-[37px]"><StopwatchIcon /></button>
      )}
      <span className={group ? "w-[897px]" : "w-[831px]"}>{name}</span>
      {children}
    </div>
  );
}

function LayerPanel() {
  return (
    <div className="flex w-[1638px] shrink-0 flex-col bg-[#262626]">
      <div className="flex h-[74px] shrink-0 items-center bg-[#282828]">
        <div className="w-[198px] text-center text-[#1a6aa5]">
          <p className="text-[29px] font-bold leading-8 text-[#3d9ff0]">0:00:24:18</p>
          <p className="text-xl leading-6">00618 (25.00 fps)</p>
        </div>
        <label className="flex h-10 min-w-0 flex-1 items-center rounded border-2 border-[#303030] bg-[#161616] pl-3">
          <SearchIcon />
          <input aria-label="Search layers" className="min-w-0 flex-1 bg-transparent outline-none" />
        </label>
        <div className="flex items-center pl-[30px] pr-[30px]">
          <button aria-label="Mini-flowchart" className="w-[69px]"><FlowchartIcon /></button>
          <button aria-label="Hide shy layers" className="w-[54px]"><ShyIcon /></button>
          <button aria-label="Frame blending" className="w-[52px]"><FramesIcon /></button>
          <button aria-label="Motion blur" className="w-[66px]"><MotionBlurIcon /></button>
          <button aria-label="Graph editor"><GraphIcon /></button>
        </div>
      </div>
      <ColumnHeader />
      <LayerRow />
      <PropertyRow name="Text" group>
        <button className="ml-[138px] flex items-center gap-[5px]">Animate: <PlayCircleIcon /></button>
      </PropertyRow>
      <PropertyRow name="Source Text">
        <button aria-label="Source Text pick whip" className="ml-[301px]"><SpiralIcon /></button>
      </PropertyRow>
      <PropertyRow name="Transform" group>
        <button className="text-[#439ee6]">Reset</button>
      </PropertyRow>
      <PropertyRow name="Position">
        <span className="w-[301px] text-[22px]">
          <button className="text-[#439ee6]">982,0</button>,<button className="text-[#439ee6]">629,0</button>
        </span>
        <button aria-label="Position pick whip"><SpiralIcon /></button>
      </PropertyRow>
    </div>
  );
}

const PX_PER_SECOND = 284 / 15;
const TIME_ORIGIN = 15;
const CURRENT_TIME = 24.72;
const TIME_LABELS = ["00:00s", "00:15s", "00:30s", "00:45s", "01:00s", "01:15s", "01:30s"];

function TrackPanel() {
  const playhead = Math.round(TIME_ORIGIN + CURRENT_TIME * PX_PER_SECOND);
  return (
    <div className="relative flex min-w-0 flex-1 flex-col overflow-hidden border-l-2 border-black bg-[#282828]">
      <div className="mt-[14px] flex h-5 shrink-0 border-y-2 border-black">
        <span className="w-[13px] border-r-2 border-black"><span className="block h-full rounded-l-full bg-[#2d8ceb]" /></span>
        <span className="flex-1 bg-[#676767]" />
      </div>
      <svg className="block h-[38px] w-full shrink-0" fill="#8f8f8f" fontSize="20" textAnchor="middle">
        {TIME_LABELS.map((label, i) => (
          <g key={label}>
            <text x={TIME_ORIGIN - 2 + i * 284} y="22">{label}</text>
            <rect x={TIME_ORIGIN - 1 + i * 284} y={i ? 28 : 22} width="2" height="16" />
          </g>
        ))}
      </svg>
      <div className="flex h-[34px] shrink-0 border-y-2 border-black">
        <span className="w-[13px] pl-[2px] pr-[1px]"><span className="block h-full rounded-l-[10px] bg-[#2d8ceb]" /></span>
        <span className="flex-1 border-t-2 border-[#6e6e6e] bg-[#5f5f5f]" />
      </div>
      <div className="h-2 shrink-0" />
      <div className="flex h-[34px] shrink-0 border-b-2 border-[#1e1e1e] bg-[#474747] pl-[14px]">
        <div className="flex-1 border-l-2 border-t-2 border-[#d09490] bg-linear-to-b from-[#b24949] to-[#924343]" />
      </div>
      {["Text", "Source Text", "Transform", "Position"].map((row) => (
        <div key={row} className="h-[34px] shrink-0 border-b-2 border-[#1e1e1e] bg-[#262626] pl-[14px]">
          <div className="h-full bg-[#333]" />
        </div>
      ))}
      <div className="flex-1 bg-[#262626] pl-[14px]"><div className="h-full bg-[#333]" /></div>

      {/* Current time indicator */}
      <div className="absolute inset-y-0 flex w-[22px] -translate-x-1/2 flex-col items-center" style={{ left: playhead }}>
        <span className="mt-4 h-[16px] w-1 shrink-0 bg-[#3f8ad6]" />
        <Icon w={22} h={28} className="mt-3">
          <path d="M0 0h22v13l-9 13H9L0 13z" fill={BLUE} />
          <path d="M8 13h6M11 13v15" stroke="#222" strokeWidth="2" />
        </Icon>
        <div className="relative flex w-full flex-1 flex-col items-center gap-3 pt-[82px]">
          <IBeam />
          <IBeam />
          <IBeam />
          <IBeam />
          <span className="absolute left-2 top-[34px] h-[6px] w-1 bg-[#1f9a2f]" />
          <span className="absolute inset-y-0 left-[10px] w-[2px] bg-[#3f8ad6]" />
        </div>
      </div>
    </div>
  );
}

function TimelinePanel() {
  return (
    <section className="flex min-h-0 flex-[498_1_0%] flex-col bg-[#282828]">
      <nav className="flex h-[52px] shrink-0 items-stretch pl-[50px]">
        <button className="flex w-[466px] items-center gap-[22px] text-[#9a9a9a]">
          <Swatch />
          00 ZH-Components_2.6_Seals_v01
        </button>
        <div className="flex items-center border-b-4 border-[#b4b4b4] pt-1 text-[#d0d0d0]">
          <button aria-label="Close tab" className="mr-[18px] pt-1"><CloseIcon /></button>
          <Swatch />
          <button className="pl-[22px] pr-5">Text test</button>
          <button aria-label="Timeline menu" className="pt-1"><MenuIcon /></button>
        </div>
      </nav>
      <div className="flex min-h-0 flex-1">
        <LayerPanel />
        <TrackPanel />
      </div>
    </section>
  );
}

export default function App() {
  return (
    <main className="flex h-screen flex-col gap-2 overflow-hidden bg-[#161616] font-['Noto_Sans_CJK_SC',sans-serif] text-[21px] leading-8">
      <div className="flex min-h-0 flex-[1720_1_0%] gap-2">
        <ProjectPanel />
        <EssentialGraphicsPanel />
        <CompositionPanel />
      </div>
      <TimelinePanel />
    </main>
  );
}
